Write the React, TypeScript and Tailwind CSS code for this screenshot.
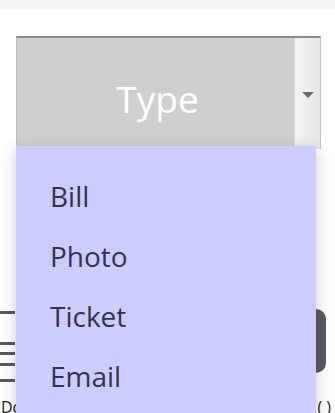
import React from "react";

const items = ["Bill", "Photo", "Ticket", "Email"];

export default function App() {
  return (
    <div
      className="relative w-[335px] h-[413px] overflow-hidden bg-white"
      style={{ fontFamily: '"Open Sans", "Noto Sans", sans-serif' }}
    >
      <div className="h-[9px] bg-[#f4f4f4]" />

      {/* select box */}
      <div className="mt-[27px] ml-[16px] w-[305px] h-[113px] flex border-t-2 border-l border-r border-t-[#8a8a8a] border-l-[#bdbdbd] border-r-[#c4c4c4] bg-[#cfcfcf]">
        <div className="flex-1 flex items-center justify-center text-white text-[37px] leading-none pt-[10px] pl-[4px]">
          Type
        </div>
        <div className="w-[26px] flex items-center justify-center bg-gradient-to-r from-[#f4f4f4] to-[#e6e6e6] border-l border-[#dcdcdc]">
          <svg width="12" height="7" viewBox="0 0 12 7" className="mt-[4px]">
            <path d="M0 0 H12 L6 6 Z" fill="#6a6a6a" />
          </svg>
        </div>
      </div>

      {/* content behind the menu */}
      <div className="mt-[160px] flex items-start justify-between h-[66px]">
        <div className="w-[15px] mt-[2px] flex flex-col">
          <div className="h-[3px] bg-[#5a5a5a]" />
          <div className="h-[3px] bg-[#5a5a5a] mt-[28px]" />
          <div className="h-[3px] bg-[#5a5a5a] mt-[7px]" />
          <div className="h-[3px] bg-[#5a5a5a] mt-[8px]" />
          <div className="h-[3px] bg-[#5a5a5a] mt-[13px]" />
        </div>
        <div className="w-[40px] h-[64px] mr-[9px] bg-[#5b5b5f] rounded-r-[10px]" />
      </div>
      <div className="mt-[24px] flex justify-between text-[#222] text-[16px] leading-none px-[1px]">
        <span>Dc</span>
        <span className="mr-[3px]">( )</span>
      </div>

      {/* dropdown menu */}
      <div className="absolute left-[16px] top-[146px] w-[300px] h-[280px] bg-[#ccccff] shadow-[0_4px_14px_rgba(0,0,0,0.22)] pt-[20px]">
        {items.map((it) => (
          <div key={it} className="h-[60px] pl-[34px] flex items-center text-[28px] text-[#33334d]">
            {it}
          </div>
        ))}
      </div>
    </div>
  );
}
